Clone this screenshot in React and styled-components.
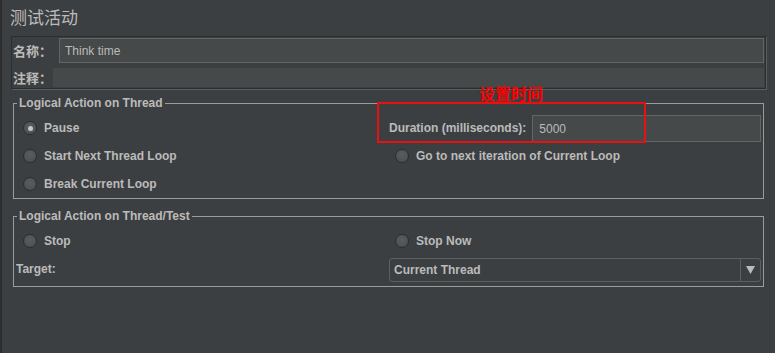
import React from "react";
import styled, { createGlobalStyle } from "styled-components";

const GlobalStyle = createGlobalStyle`
  html, body {
    margin: 0;
    padding: 0;
    background: #3c3f41;
  }
  body {
    font-family: "Liberation Sans", Arial, sans-serif;
    font-size: 12px;
    color: #bbbbbb;
  }
`;

const Page = styled.div`
  position: relative;
  width: 775px;
  height: 353px;
  box-sizing: border-box;
  border-left: 2px solid #2b2d2e;
  padding: 0 10px 0 9px;
  overflow: hidden;
`;

const Title = styled.div`
  font-family: "Noto Sans CJK SC", sans-serif;
  font-size: 17px;
  line-height: 20px;
  height: 20px;
  padding-top: 7px;
  margin-left: -1px;
  color: #bbbbbb;
`;

const NamePanel = styled.div`
  margin-top: 9px;
  width: 755px;
  box-sizing: border-box;
  border: 1px solid #2b2d2e;
  box-shadow: 1px 1px 0 #5b5e60;
  padding: 1px 1px 1px 0;
  display: flex;
  flex-direction: column;
  gap: 5px;
`;

const NameRow = styled.div`
  display: flex;
  align-items: center;
  height: ${(p) => p.$h}px;
`;

const CjkLabel = styled.span`
  font-family: "Noto Sans CJK SC", sans-serif;
  font-weight: bold;
  font-size: 13px;
  width: ${(p) => p.$w}px;
  padding-left: 1px;
  flex: none;
`;

const TextField = styled.div`
  flex: 1;
  align-self: stretch;
  box-sizing: border-box;
  background: #45494a;
  border: 1px solid ${(p) => (p.$plain ? "#45494a" : "#646464")};
  padding-left: 5px;
  display: flex;
  align-items: center;
  color: #bbbbbb;
  font-size: 12px;
`;

const Group = styled.fieldset`
  margin: ${(p) => p.$top}px 0 0 2px;
  width: 751px;
  box-sizing: border-box;
  border: 1px solid #9b9b9b;
  padding: 4px 2px ${(p) => p.$bottom}px 2px;
  display: grid;
  grid-template-columns: 373px 1fr;
  grid-auto-rows: 28px;
`;

const Legend = styled.legend`
  font-weight: bold;
  font-size: 12px;
  line-height: 14px;
  padding: 0 2px;
  margin-left: 1px;
  color: #bbbbbb;
`;

const Cell = styled.div`
  display: flex;
  align-items: center;
  padding-left: ${(p) => p.$pad || 0}px;
  font-weight: bold;
`;

const RadioDot = styled.span`
  width: 14px;
  height: 14px;
  border-radius: 50%;
  box-sizing: border-box;
  background: radial-gradient(circle at 50% 40%, #5a5d5f, #4a4d4f);
  border: 1px solid #2b2d2e;
  margin-right: 7px;
  margin-left: -1px;
  display: flex;
  align-items: center;
  justify-content: center;
  flex: none;
  &::after {
    content: "";
    width: 5px;
    height: 5px;
    border-radius: 50%;
    background: ${(p) => (p.$on ? "#c6c6c6" : "transparent")};
  }
`;

const Radio = ({ on, children, pad }) => (
  <Cell $pad={pad}>
    <RadioDot $on={on} />
    {children}
  </Cell>
);

const DurationInput = styled.div`
  flex: 1;
  height: 27px;
  margin-left: 6px;
  margin-top: 1px;
  box-sizing: border-box;
  background: #45494a;
  border: 1px solid #646464;
  display: flex;
  align-items: center;
  padding-left: 6px;
  font-weight: normal;
`;

const Combo = styled.div`
  flex: 1;
  height: 24px;
  margin-top: 1px;
  box-sizing: border-box;
  border: 1px solid #5e6060;
  border-radius: 3px;
  display: flex;
  align-items: center;
`;

const ComboText = styled.span`
  flex: 1;
  padding-left: 4px;
`;

const ComboArrow = styled.span`
  width: 19px;
  align-self: stretch;
  border-left: 1px solid #5e6060;
  display: flex;
  align-items: center;
  justify-content: center;
`;

const Callout = styled.div`
  position: absolute;
  left: 375px;
  top: 102px;
  width: 269px;
  height: 41px;
  box-sizing: border-box;
  border: 2px solid #e81010;
  pointer-events: none;
`;

const CalloutText = styled.div`
  position: absolute;
  left: 477px;
  top: 83px;
  font-family: "Noto Sans CJK SC", sans-serif;
  font-weight: bold;
  font-size: 16px;
  line-height: 20px;
  color: #ff0000;
`;

export default function App() {
  return (
    <>
      <GlobalStyle />
      <Page>
        <Title>测试活动</Title>
        <NamePanel>
          <NameRow $h={25}>
            <CjkLabel $w={46}>名称：</CjkLabel>
            <TextField>Think time</TextField>
          </NameRow>
          <NameRow $h={19}>
            <CjkLabel $w={40}>注释：</CjkLabel>
            <TextField $plain />
          </NameRow>
        </NamePanel>

        <Group $top={7} $bottom={0}>
          <Legend>Logical Action on Thread</Legend>
          <Radio on pad={8}>Pause</Radio>
          <Cell>
            Duration (milliseconds):
            <DurationInput>5000</DurationInput>
          </Cell>
          <Radio pad={8}>Start Next Thread Loop</Radio>
          <Radio pad={7}>Go to next iteration of Current Loop</Radio>
          <Radio pad={8}>Break Current Loop</Radio>
        </Group>

        <Group $top={10} $bottom={3}>
          <Legend>Logical Action on Thread/Test</Legend>
          <Radio pad={8}>Stop</Radio>
          <Radio pad={7}>Stop Now</Radio>
          <Cell>Target:</Cell>
          <Cell>
            <Combo>
              <ComboText>Current Thread</ComboText>
              <ComboArrow>
                <svg width="9" height="8" viewBox="0 0 9 8">
                  <path d="M0 0 H9 L4.5 8 Z" fill="#bbbbbb" />
                </svg>
              </ComboArrow>
            </Combo>
          </Cell>
        </Group>

        <CalloutText>设置时间</CalloutText>
        <Callout />
      </Page>
    </>
  );
}
